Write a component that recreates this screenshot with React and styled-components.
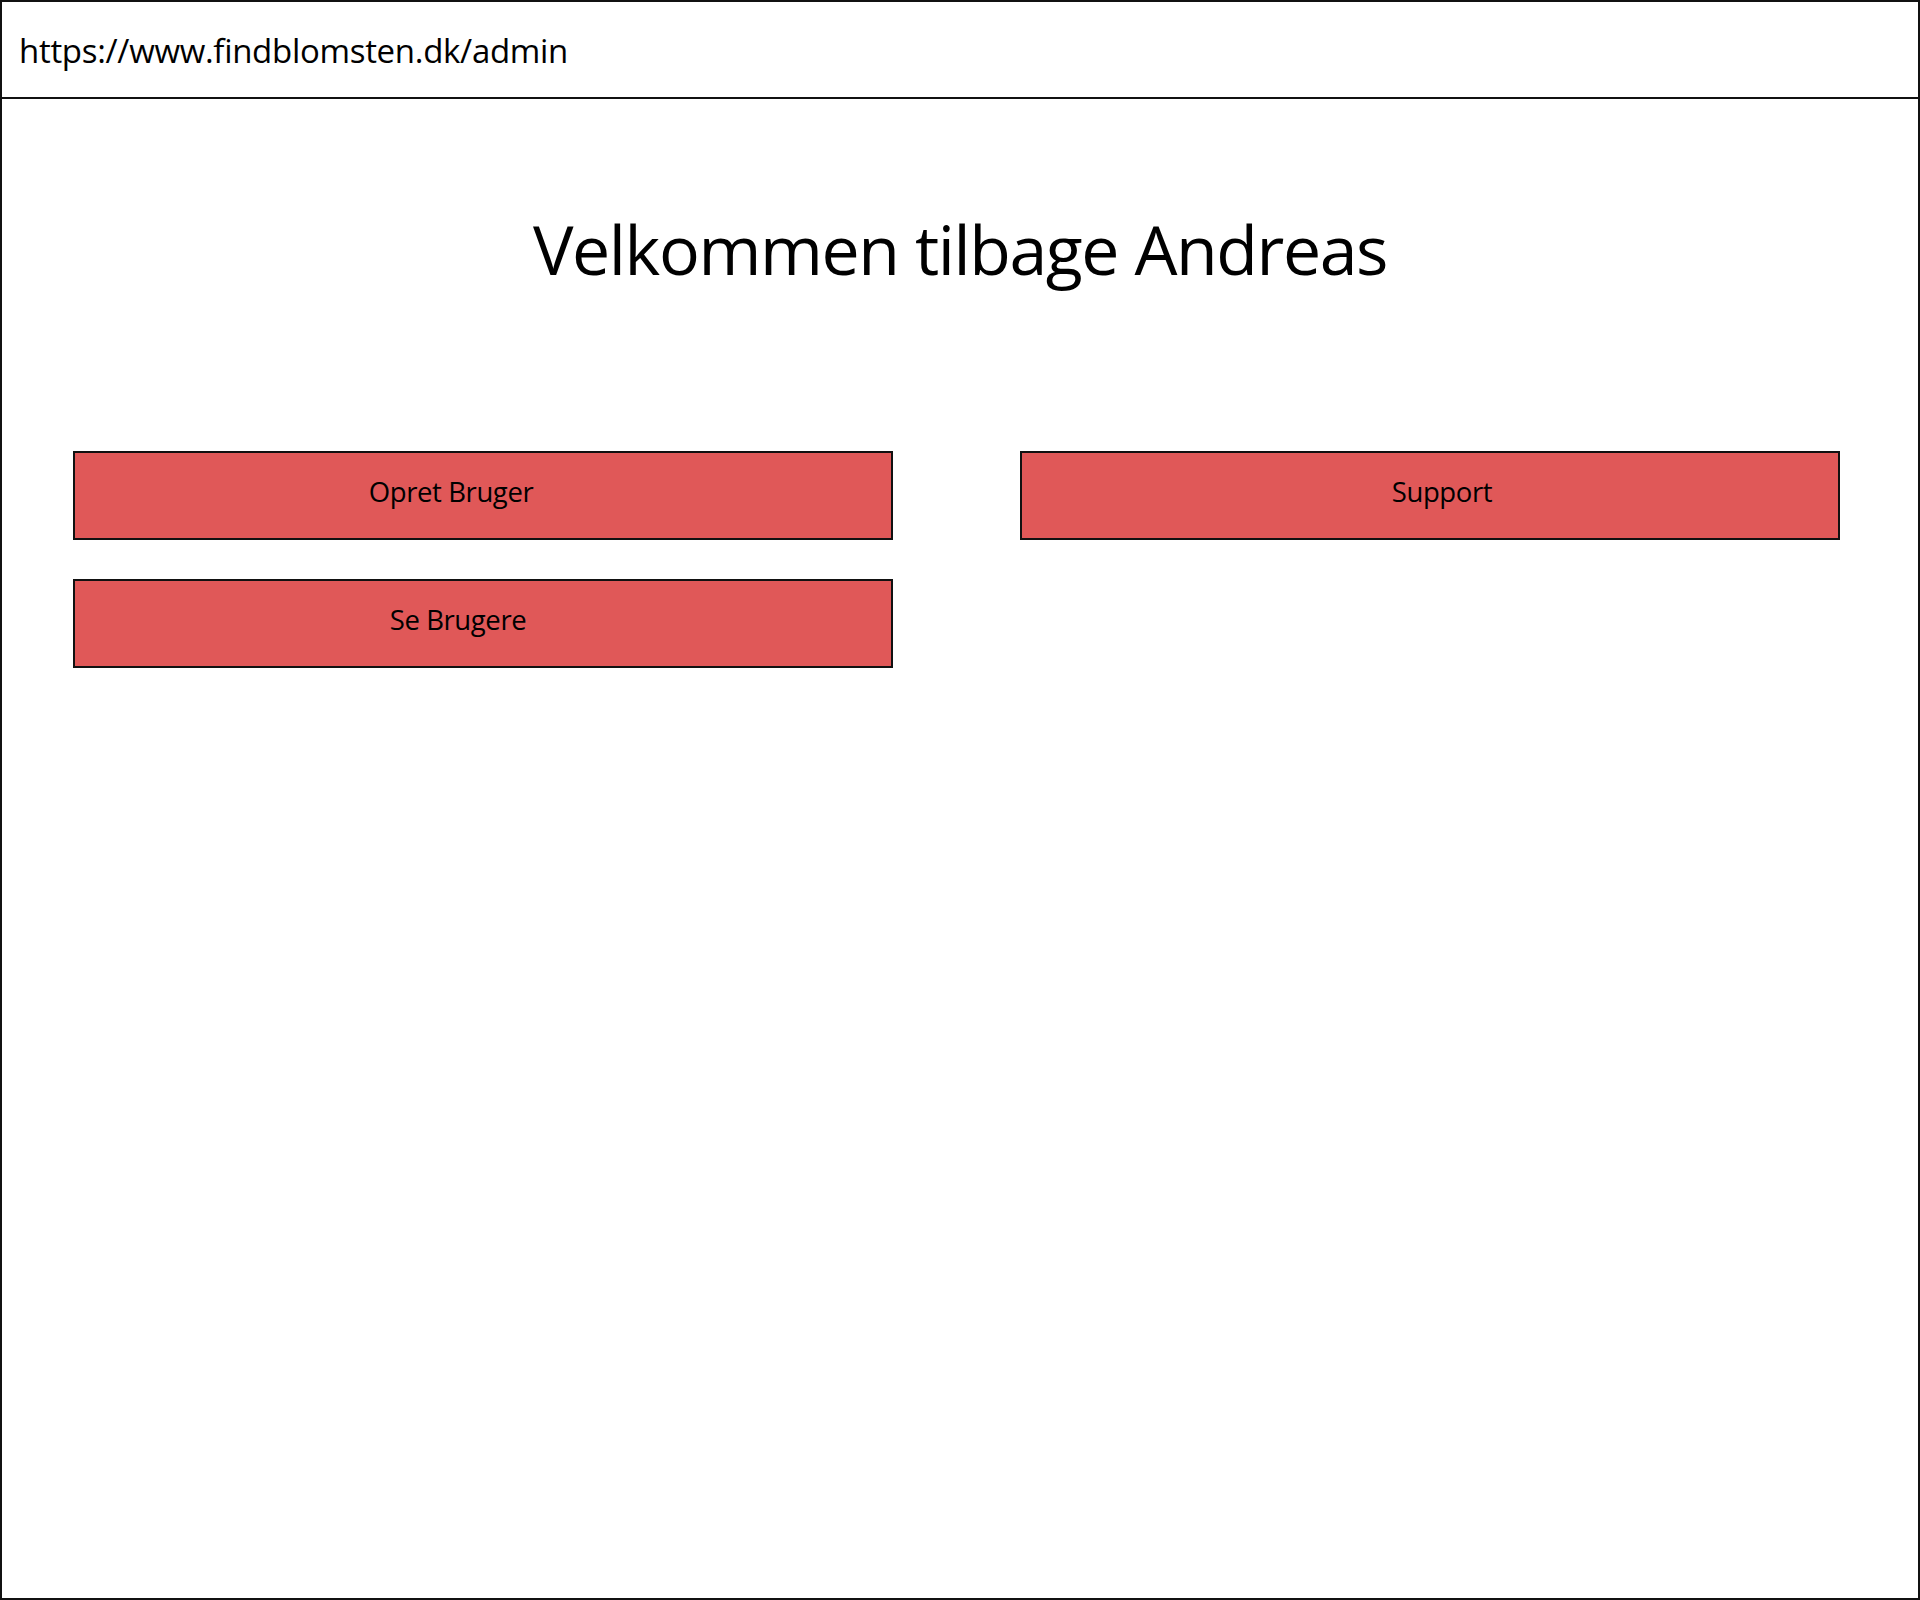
import React from 'react';
import styled, { createGlobalStyle } from 'styled-components';

const GlobalStyle = createGlobalStyle`
    html, body {
        margin: 0;
        padding: 0;
        background: #ffffff;
    }
    * {
        box-sizing: border-box;
    }
`;

const Frame = styled.div`
    width: 1920px;
    height: 1600px;
    border: 2px solid #111;
    display: flex;
    flex-direction: column;
    font-family: "Open Sans", "Noto Sans", sans-serif;
    color: #000;
`;

const AddressBar = styled.div`
    height: 97px;
    border-bottom: 2px solid #111;
    display: flex;
    align-items: center;
    padding: 2px 0 0 17px;
    font-size: 33px;
    letter-spacing: -0.3px;
`;

const Title = styled.h1`
    margin: 116px 0 0;
    text-align: center;
    font-weight: 400;
    font-size: 68px;
    letter-spacing: -1.4px;
    line-height: 1;
`;

const ButtonGrid = styled.div`
    display: grid;
    grid-template-columns: 820px 820px;
    column-gap: 127px;
    row-gap: 39px;
    padding-left: 71px;
    margin-top: 168px;
`;

const MenuButton = styled.button`
    height: 89px;
    border: 2px solid #111;
    background: #e05858;
    display: flex;
    align-items: center;
    justify-content: center;
    font-family: inherit;
    font-size: 27.5px;
    letter-spacing: -0.4px;
    color: #000;
    cursor: pointer;
    padding: 0 ${p => Math.max(0, -2 * p.$shift)}px 8px ${p => Math.max(0, 2 * p.$shift)}px;
`;

const buttons = [
    { label: 'Opret Bruger', shift: -32 },
    { label: 'Support', shift: 12 },
    { label: 'Se Brugere', shift: -25 },
];

const App = () => {
    return (
        <>
            <GlobalStyle />
            <Frame>
                <AddressBar>https://www.findblomsten.dk/admin</AddressBar>
                <Title>Velkommen tilbage Andreas</Title>
                <ButtonGrid>
                    {buttons.map(b => (
                        <MenuButton key={b.label} $shift={b.shift}>{b.label}</MenuButton>
                    ))}
                </ButtonGrid>
            </Frame>
        </>
    );
};

export default App;
